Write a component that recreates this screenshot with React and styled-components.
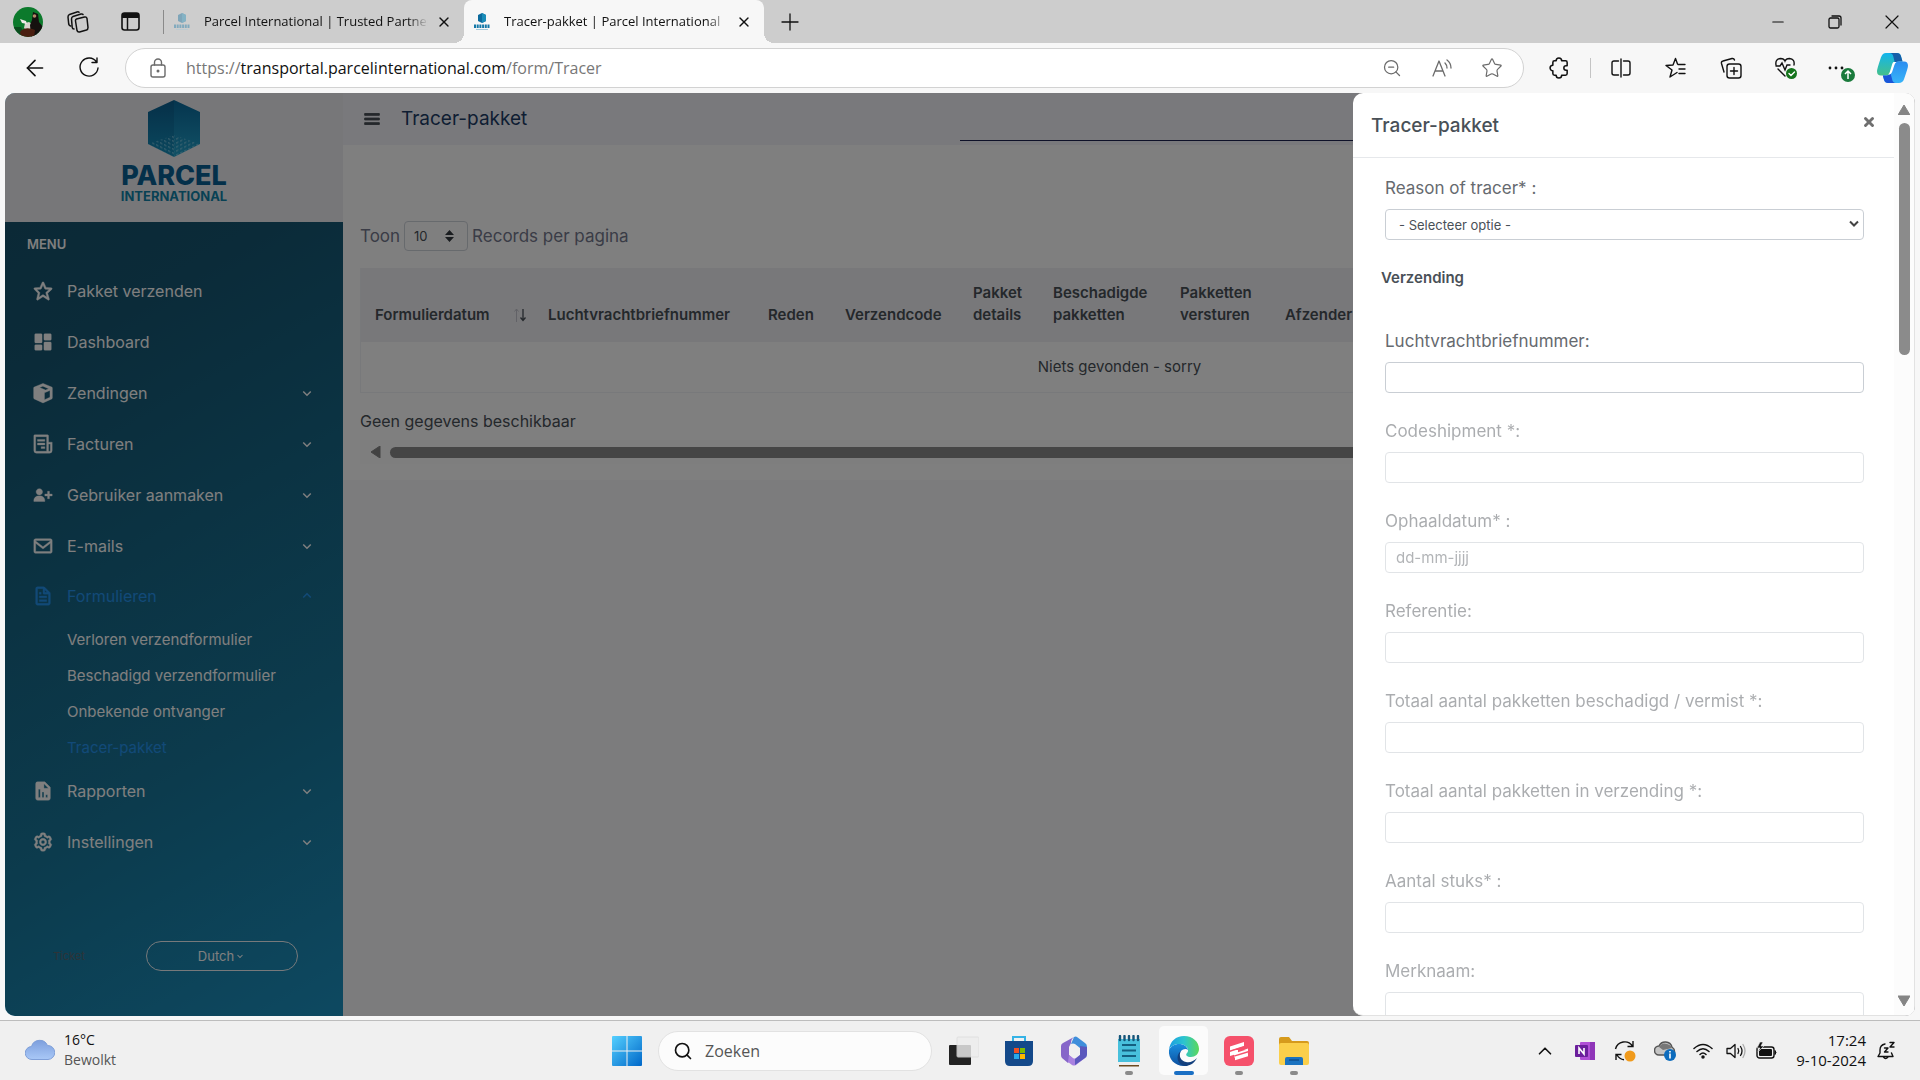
import React from 'react';
import styled, { createGlobalStyle, css } from 'styled-components';
import {
  BiStar, BiSolidDashboard, BiSolidUserPlus, BiEnvelope, BiFile,
  BiSolidReport, BiCog, BiChevronDown, BiChevronUp, BiMenu,
} from 'react-icons/bi';
import { ArrowLeft, X, Minus, ZoomOut, Star, ChevronUp, Search } from 'lucide-react';

const GlobalStyle = createGlobalStyle`
  *, *::before, *::after { box-sizing: border-box; }
  html, body { margin: 0; height: 100%; overflow: hidden; }
  button, input, select { font: inherit; color: inherit; margin: 0; }
  button { padding: 0; border: 0; background: none; cursor: pointer; }
  a { color: inherit; text-decoration: none; }
  svg { display: block; flex: none; }
`;

const uiFont = "'Open Sans', 'Noto Sans', sans-serif";
const pageFont = "Inter, 'Open Sans', sans-serif";

const Desktop = styled.div`
  display: flex;
  flex-direction: column;
  height: 100vh;
  background: #f7f7f7;
  font-family: ${uiFont};
  color: #111;
`;

/* ---------- browser frame ---------- */
const TabStrip = styled.header`
  display: flex;
  align-items: center;
  height: 43px;
  background: #cdcdcd;
  padding-left: 13px;
`;

const Avatar = styled.button`
  width: 30px;
  height: 30px;
  border-radius: 50%;
  overflow: hidden;
  margin-right: 24px;
`;

const StripButton = styled.button`
  display: flex;
  align-items: center;
  justify-content: center;
  width: 22px;
  height: 30px;
  margin-right: 30px;
`;

const StripRule = styled.span`
  width: 1px;
  height: 24px;
  margin-left: -8px;
  background: #8a8a8a;
`;

const Tab = styled.div`
  position: relative;
  display: flex;
  align-items: center;
  gap: 14px;
  height: 43px;
  width: 300px;
  padding: 0 12px 0 10px;
  font-size: 13px;
  border-radius: 8px 8px 0 0;
  ${(p) => p.$active && css`
    background: #f7f7f7;
    &::before, &::after {
      content: '';
      position: absolute;
      bottom: 0;
      width: 10px;
      height: 10px;
    }
    &::before { left: -10px; background: radial-gradient(circle at 0 0, transparent 10px, #f7f7f7 10px); }
    &::after { right: -10px; background: radial-gradient(circle at 100% 0, transparent 10px, #f7f7f7 10px); }
  `}
`;

const TabTitle = styled.a`
  flex: 1;
  overflow: hidden;
  white-space: nowrap;
  line-height: 20px;
  padding-bottom: 2px;
  margin-right: -6px;
  mask-image: linear-gradient(90deg, #000 calc(100% - 20px), transparent);
`;

const TabClose = styled.button`
  width: 16px;
  height: 16px;
`;

const NewTab = styled.button`
  margin-left: 17px;
`;

const WindowControls = styled.div`
  display: flex;
  margin-left: auto;
`;

const WindowButton = styled.button`
  display: flex;
  align-items: center;
  justify-content: center;
  width: 57px;
  height: 43px;
`;

const Toolbar = styled.div`
  display: flex;
  align-items: center;
  height: 50px;
  padding: 0 4px 0 22px;
`;

const NavButtons = styled.div`
  display: flex;
  gap: 26px;
`;

const ToolButton = styled.button`
  position: relative;
  display: flex;
  align-items: center;
  justify-content: center;
  width: ${(p) => p.$w || 55}px;
  height: 40px;
  flex: none;
`;

const AddressBar = styled.div`
  display: flex;
  align-items: center;
  flex: 1;
  height: 40px;
  margin: 0 8px 0 21px;
  padding: 0 6px 0 22px;
  border: 1px solid #d2d2d2;
  border-radius: 20px;
  background: #fff;
  color: #6b6b6b;
`;

const Url = styled.a`
  flex: 1;
  margin-left: 18px;
  font-size: 16px;
  line-height: 24px;
  color: #777;
  strong { font-weight: 400; color: #111; }
`;

const ToolRule = styled.span`
  width: 1px;
  height: 20px;
  margin: 0 3px;
  background: #c4c4c4;
`;

/* ---------- web page ---------- */
const Viewport = styled.div`
  position: relative;
  flex: 1;
  min-height: 0;
  display: flex;
  margin: 0 5px 4px;
  border-radius: 10px;
  overflow: hidden;
  background: #f8f8fb;
  font-family: ${pageFont};
  color: #495057;
`;

const Sidebar = styled.aside`
  display: flex;
  flex-direction: column;
  width: 338px;
  flex: none;
  background: linear-gradient(150deg, #165068 0%, #165672 25%, #18769a 70%, #1b92c2 100%);
  color: #fff;
`;

const Brand = styled.a`
  display: flex;
  flex-direction: column;
  align-items: center;
  height: 129px;
  padding-top: 7px;
  background: #efeff3;
  color: #0d6f9f;
`;

const BrandName = styled.span`
  font-size: 27px;
  line-height: 26px;
  font-weight: 800;
  margin-top: 6px;
  color: #096195;
`;

const BrandSub = styled.span`
  font-size: 13px;
  line-height: 14px;
  font-weight: 700;
  color: #1183a8;
`;

const MenuTitle = styled.h2`
  margin: 0;
  padding-left: 22px;
  font-size: 13px;
  font-weight: 600;
  line-height: 44px;
  height: 43px;
`;

const Menu = styled.ul`
  list-style: none;
  margin: 0;
  padding: 0;
`;

const MenuLink = styled.a`
  display: flex;
  align-items: center;
  gap: 13px;
  height: ${(p) => (p.$active ? 50 : 51)}px;
  padding: 0 27px;
  font-size: 16px;
  color: ${(p) => (p.$active ? '#2494f0' : '#fff')};
`;

const MenuIcon = styled.span`
  svg { stroke: currentColor; stroke-width: 0.4px; }
`;

const MenuLabel = styled.span`
  flex: 1;
`;

const SubLink = styled.a`
  display: flex;
  align-items: center;
  height: 36px;
  padding-left: 62px;
  font-size: 15px;
  color: ${(p) => (p.$active ? '#2494f0' : '#fff')};
`;

const SidebarFoot = styled.div`
  display: flex;
  align-items: center;
  justify-content: space-between;
  margin-top: auto;
  padding: 0 45px 45px 48px;
`;

const FootLink = styled.a`
  font-size: 11px;
  color: #5a6870;
`;

const LanguageButton = styled.button`
  display: flex;
  align-items: center;
  justify-content: center;
  width: 152px;
  height: 30px;
  border: 1px solid #eef3f6;
  border-radius: 15px;
  font-size: 13px;
`;

const Main = styled.main`
  flex: 1;
  min-width: 0;
`;

const Topbar = styled.div`
  display: flex;
  align-items: center;
  height: 52px;
  padding-left: 18px;
  background: #f3f3f8;
`;

const PageTitle = styled.h1`
  flex: none;
  width: 559px;
  margin: 0 0 0 18px;
  font-size: 19px;
  line-height: 24px;
  font-weight: 400;
  color: #1d3c66;
`;

const TopSearch = styled.input`
  flex: 1;
  min-width: 0;
  height: 44px;
  border: 0;
  border-bottom: 1px solid #1d2350;
  background: none;
  outline: 0;
`;

const Content = styled.section`
  padding: 76px 37px 16px 17px;
  background: #fff;
`;

const LengthRow = styled.label`
  display: flex;
  align-items: center;
  gap: 4px;
  height: 30px;
  font-size: 17px;
  color: #74788d;
`;

const LengthBox = styled.span`
  position: relative;
  display: block;
  svg { position: absolute; right: 14px; top: 9px; pointer-events: none; }
`;

const LengthSelect = styled.select`
  appearance: none;
  display: block;
  width: 64px;
  height: 30px;
  padding: 0 9px;
  border: 1px solid #ced4da;
  border-radius: 4px;
  background: #fff;
  font-size: 13px;
  color: #495057;
`;

const Table = styled.table`
  width: 100%;
  margin-top: 17px;
  border-collapse: separate;
  border-spacing: 0;
  table-layout: fixed;
  border: solid #f1f2f6;
  border-width: 0 0 1px 1px;
  font-size: 15px;
  line-height: 22px;
`;

const Th = styled.th`
  width: ${(p) => (p.$w ? `${p.$w}px` : 'auto')};
  padding: 14px 8px 16px 14px;
  background: #f1f1f5;
  font-weight: 600;
  text-align: left;
  vertical-align: bottom;
`;

const HeadCell = styled.span`
  display: flex;
  justify-content: space-between;
  align-items: center;
`;

const Td = styled.td`
  padding: 14px;
  text-align: center;
`;

const TableInfo = styled.p`
  margin: 17px 0 8px;
  font-size: 16px;
  line-height: 22px;
`;

const HScroll = styled.div`
  display: flex;
  align-items: center;
  gap: 8px;
  height: 24px;
  padding: 0 10px;
  background: #fcfcfc;
`;

const HThumb = styled.span`
  flex: 1;
  height: 11px;
  border-radius: 6px;
  background: #8b8b8b;
`;

const Backdrop = styled.div`
  position: absolute;
  inset: 0;
  background: rgba(0, 0, 0, 0.5);
`;

/* ---------- drawer ---------- */
const Drawer = styled.div`
  position: absolute;
  inset: 0 0 0 auto;
  display: flex;
  width: 562px;
  border-radius: 10px 0 0 10px;
  overflow: hidden;
  background: #fff;
  border-right: 1px solid #e2e2e2;
  border-bottom: 1px solid #e2e2e2;
`;

const DrawerPanel = styled.div`
  flex: 1;
  min-width: 0;
  overflow: hidden;
`;

const DrawerHead = styled.div`
  display: flex;
  justify-content: space-between;
  align-items: center;
  height: 65px;
  padding: 0 15px 0 18px;
  border-bottom: 1px solid #e6e8eb;
`;

const DrawerTitle = styled.h2`
  margin: 0;
  padding-top: 2px;
  font-size: 19px;
  line-height: 24px;
  font-weight: 500;
`;

const CloseButton = styled.button`
  width: 20px;
  height: 26px;
  padding-bottom: 6px;
  display: flex;
  align-items: center;
  justify-content: center;
  color: #6f6f6f;
`;

const Form = styled.form`
  padding: 18px 30px 0 28px;
`;

const Field = styled.div`
  display: flex;
  flex-direction: column;
  gap: 9px;
  padding-left: 4px;
  margin-bottom: 26px;
  opacity: ${(p) => (p.$off ? 0.55 : 1)};
`;

const FieldLabel = styled.label`
  font-size: 17px;
  line-height: 24px;
  color: #666a6f;
`;

const controlBox = css`
  width: 100%;
  height: 31px;
  padding: 0 10px;
  border: 1px solid #c9ced4;
  border-radius: 4px;
  background: #fff;
  outline: 0;
`;

const TextInput = styled.input`
  ${controlBox}
  font-size: 15px;
  &::placeholder { color: #74787d; opacity: 1; }
`;

const SelectBox = styled.span`
  position: relative;
  display: block;
  svg { position: absolute; right: 4px; top: 10px; pointer-events: none; }
`;

const SelectInput = styled.select`
  ${controlBox}
  appearance: none;
  display: block;
  padding: 0 13px;
  font-size: 13px;
`;

const SectionTitle = styled.h3`
  margin: 0 0 39px;
  font-size: 15px;
  line-height: 24px;
  font-weight: 600;
`;

const VScroll = styled.div`
  display: flex;
  flex-direction: column;
  align-items: center;
  width: 20px;
  padding: 10px 0 8px;
  background: #fcfcfc;
`;

const VThumb = styled.span`
  width: 11px;
  height: 232px;
  margin: 8px 0 auto;
  border-radius: 6px;
  background: #8b8b8b;
`;

/* ---------- taskbar ---------- */
const Taskbar = styled.footer`
  display: grid;
  grid-template-columns: 1fr auto 1fr;
  align-items: center;
  height: 60px;
  border-top: 1px solid #bdbdbd;
  background: #f0f0f0;
`;

const Weather = styled.button`
  display: flex;
  align-items: center;
  gap: 9px;
  padding: 0 0 2px 25px;
  text-align: left;
  font-size: 14px;
  line-height: 20px;
`;

const Lines = styled.span`
  display: flex;
  flex-direction: column;
  text-align: ${(p) => p.$align || 'left'};
`;

const Muted = styled.span`
  color: #555;
`;

const Dock = styled.div`
  display: flex;
  align-items: center;
`;

const DockButton = styled.button`
  position: relative;
  display: flex;
  align-items: center;
  justify-content: center;
  width: 49px;
  height: 49px;
  margin: 0 3px;
  border-radius: 5px;
  background: ${(p) => (p.$active ? '#fbfbfb' : 'none')};
  &::after {
    content: '';
    display: ${(p) => (p.$open ? 'block' : 'none')};
    position: absolute;
    bottom: 0;
    width: ${(p) => (p.$active ? 20 : 8)}px;
    height: 4px;
    border-radius: 2px;
    background: ${(p) => (p.$active ? '#1a6fc4' : '#8a8a8a')};
  }
`;

const SearchPill = styled.label`
  display: flex;
  align-items: center;
  gap: 10px;
  width: 274px;
  height: 40px;
  margin: 0 4px;
  padding: 0 14px;
  border: 1px solid #e2e2e2;
  border-radius: 20px;
  background: #fcfcfc;
`;

const SearchInput = styled.input`
  flex: 1;
  min-width: 0;
  border: 0;
  background: none;
  outline: 0;
  font-size: 16px;
  &::placeholder { color: #555; opacity: 1; }
`;

const Tray = styled.div`
  display: flex;
  align-items: center;
  justify-content: flex-end;
  padding-right: 20px;
`;

const TrayButton = styled.button`
  display: flex;
  align-items: center;
  justify-content: center;
  width: ${(p) => p.$w || 40}px;
  height: 40px;
`;

const Clock = styled.button`
  margin: 0 6px 0 15px;
  padding-bottom: 2px;
  font-size: 15px;
  line-height: 20px;
`;

/* ---------- drawings ---------- */
const Line = ({ w = 22, h, vb = 22, sw = 1.4, children }) => (
  <svg width={w} height={h || w} viewBox={`0 0 ${vb} ${vb}`} fill="none" stroke="currentColor" strokeWidth={sw} strokeLinecap="round" strokeLinejoin="round" aria-hidden="true">{children}</svg>
);

const AvatarArt = () => (
  <svg width="30" height="30" viewBox="0 0 30 30">
    <rect width="30" height="30" fill="#0c7a2c" />
    <path d="M0 20h8l2 4-4 6H0z" fill="#0a4d1e" />
    <path d="M12 16l4-1 3 2 1 6-5 2-4-4z" fill="#d9d4cd" />
    <path d="M7 12l6 2 1 3-5-1z" fill="#f0ece8" />
    <path d="M20 5l5 2 1 8 4 5v10H18l-1-12 2-5z" fill="#15110f" />
    <path d="M7 25c4-5 10-4 15-2l-1 7H8z" fill="#4a1e10" />
    <circle cx="21.500" cy="9" r="1.800" fill="#b98a6a" />
  </svg>
);

const CubeArt = () => (
  <svg width="52" height="57" viewBox="0 0 52 57" aria-hidden="true">
    <defs>
      <linearGradient id="cubeL" x1="0" y1="0" x2="0" y2="1"><stop offset="0" stopColor="#0b5f90" /><stop offset="1" stopColor="#1791bd" /></linearGradient>
      <linearGradient id="cubeR" x1="0" y1="0" x2="0" y2="1"><stop offset="0" stopColor="#0a6a9d" /><stop offset="1" stopColor="#23a3cc" /></linearGradient>
      <pattern id="dotsL" width="4" height="4" patternUnits="userSpaceOnUse" patternTransform="skewY(26)"><rect width="2.400" height="1.600" fill="#8fd3ea" /></pattern>
      <pattern id="dotsR" width="4" height="4" patternUnits="userSpaceOnUse" patternTransform="skewY(-26)"><rect width="2.400" height="1.600" fill="#8fd3ea" /></pattern>
    </defs>
    <path d="M26 0L0 12v32l26 13z" fill="url(#cubeL)" />
    <path d="M26 0l26 12v32L26 57z" fill="url(#cubeR)" />
    <path d="M26 35v22L0 44z" fill="url(#dotsL)" opacity=".6" />
    <path d="M26 35v22l26-13z" fill="url(#dotsR)" opacity=".6" />
  </svg>
);

const Favicon = ({ dim }) => (
  <svg width="16" height="18" viewBox="0 0 16 18" opacity={dim ? 0.4 : 1} aria-hidden="true">
    <path d="M8 0l4 2v6l-4 2-4-2V2z" fill="#0b6a9d" />
    <path d="M8 0l4 2v6l-4 2z" fill="#1a8cb8" />
    <path d="M0 13.200h16" stroke="#1478a8" strokeWidth="3.400" strokeDasharray="2 .7" />
    <rect x="2" y="16" width="12" height="1" fill="#a4c9da" />
  </svg>
);

const RefreshArt = () => (
  <Line><path d="M18.500 5A9 9 0 1 0 20 11M19 1v4.500h-5" /></Line>
);

const ZendingenIcon = ({ size }) => (
  <svg width={size} height={size} viewBox="0 0 24 24" aria-hidden="true">
    <path fill="currentColor" fillRule="evenodd" d="M12 1.500L21.500 5.500q.7.300.7 1v10.800q0 .8-.7 1.200L12 22.800 2.500 18.500q-.7-.4-.7-1.200V6.500q0-.7.700-1zM13.600 11.800v7.600l6-2.800V9.200zM8.300 5.900l6.500 2.900 3.400-1.500-6.300-2.700z" />
  </svg>
);

const FacturenIcon = ({ size }) => (
  <svg width={size} height={size} viewBox="0 0 24 24" aria-hidden="true">
    <path fill="currentColor" d="M19 22H5a3 3 0 0 1-3-3V3a1 1 0 0 1 1-1h14a1 1 0 0 1 1 1v7h4v9a3 3 0 0 1-3 3zm-1-10v7a1 1 0 0 0 2 0v-7zm-2 8V4H4v15a1 1 0 0 0 1 1zM6 7h8v2H6zm0 4h8v2H6zm4 4h4v2h-4z" />
  </svg>
);

const Caret = () => (
  <svg width="12" height="10" viewBox="0 0 12 10" aria-hidden="true"><path d="M2 2.500l4 4 4-4" fill="none" stroke="#444" strokeWidth="2" /></svg>
);

const UpDown = () => (
  <svg width="9" height="12" viewBox="0 0 9 12" aria-hidden="true"><path d="M0 5l4.500-5L9 5zM0 7l4.500 5L9 7z" fill="#343a40" /></svg>
);

const SortArrows = () => (
  <svg width="12" height="14" viewBox="0 0 12 14" aria-hidden="true" fill="none">
    <path d="M2.500 14V1M.5 3.500L2.500 1l2 2.500" stroke="#c4c5ce" />
    <path d="M9 1v11M6.500 9.500L9 12.500l2.500-3" stroke="#495057" strokeWidth="1.300" />
  </svg>
);

const Arrow = ({ dir }) => {
  const d = { left: 'M10 0v12L1 6z', up: 'M0 12h12L6 2z', down: 'M0 1h12L6 11z' }[dir];
  return <svg width="12" height="12" viewBox="0 0 12 12" aria-hidden="true"><path d={d} fill="#858585" stroke="#858585" strokeLinejoin="round" /></svg>;
};

const Copilot = () => (
  <svg width="31" height="30" viewBox="0 0 31 28" preserveAspectRatio="none" aria-hidden="true">
    <defs>
      <linearGradient id="cpA" x1="0" y1="0" x2="0" y2="1"><stop offset="0" stopColor="#12b5ee" /><stop offset="1" stopColor="#45c08a" /></linearGradient>
      <linearGradient id="cpB" x1="0" y1="0" x2="0" y2="1"><stop offset="0" stopColor="#2b8df0" /><stop offset="1" stopColor="#38b4f8" /></linearGradient>
    </defs>
    <path d="M9 0h11q3 0 4 3l1.500 5H22q-4 0-5 3l-3 8q-1 2-3 2H4q-4 0-4-4 0-2 4-13Q5.500 0 9 0z" fill="url(#cpA)" />
    <path d="M17 0h3q3 0 4 3l1.500 5H22q-3 0-4 1.500L16.500 4Q16 0 12 0z" fill="#175ea8" />
    <path d="M22 28H11q-3 0-4-3l-1.200-4H10q3 0 4-3l3-7q1-3 4-3h6q4 0 4 4 0 2-4 12.500Q25.500 28 22 28z" fill="url(#cpB)" />
    <path d="M14 28h-3q-3 0-4-3l-1.200-4H10q2.500 0 3.500-2l1.500 5q.7 4 4 4z" fill="#1a55d8" />
    <path d="M16.500 8.500h3q-1.500 1-2 2.500l-2.500 7q-.8 2-2.500 2H11q1.200-.8 1.800-2.300l2.200-6.700q.5-1.800 1.500-2.500z" fill="#fff" />
  </svg>
);

const dockArt = {
  start: (
    <svg width="30" height="30" viewBox="0 0 30 30"><defs><linearGradient id="win" x1="0" y1="0" x2="1" y2="1"><stop offset="0" stopColor="#55d0ff" /><stop offset="1" stopColor="#0067c8" /></linearGradient></defs>
      <path fill="url(#win)" d="M1 0h13.500v14.500H0V1q0-1 1-1zM15.500 0H29q1 0 1 1v13.500H15.500zM0 15.500h14.500V30H1q-1 0-1-1zM15.500 15.500H30V29q0 1-1 1H15.500z" /></svg>
  ),
  tasks: (
    <svg width="30" height="30" viewBox="0 0 30 30"><rect x="0" y="9" width="22" height="20" rx="1" fill="#222" /><rect x="8" y="1" width="22" height="20" rx="1" fill="#ededed" opacity=".82" stroke="#dcdcdc" /></svg>
  ),
  store: (
    <svg width="30" height="30" viewBox="0 0 30 30"><path d="M9 6V1h12v5" fill="none" stroke="#35b3e6" strokeWidth="2" /><path d="M1 5h28v20q0 5-5 5H6q-5 0-5-5z" fill="#14498a" /><path d="M10 12h5v5h-5z" fill="#f25022" /><path d="M16 12h5v5h-5z" fill="#7fba00" /><path d="M10 18h5v5h-5z" fill="#29a8ea" /><path d="M16 18h5v5h-5z" fill="#ffb900" /></svg>
  ),
  office: (
    <svg width="28" height="30" viewBox="0 0 28 30"><path d="M14 1q2-1 3 0l8 6q2 1 2 4v7q0 2-2 3l-5-3v-6l-5-4q-2-1-4 0z" fill="#3f8edb" /><path d="M14 1q-3 2-3 6l-2 4v8l3 3-4 5-6-5q-1-1-1-3v-9q0-2 2-3z" fill="#8666c9" /><path d="M9 19l4 3q1.500 1 3 0l4-3v-5l6 6-1 2-9 7q-2 1-4 0l-4-3z" fill="#a981e0" /><path d="M20 10v9l-5 4 0 6 10-7q2-1 2-4v-7z" fill="#5b58bd" /></svg>
  ),
  notepad: (
    <svg width="24" height="32" viewBox="0 0 24 32"><path d="M1 4h22v24H1z" fill="#48c0dc" /><path d="M1 27h22v3q0 1-1 1H2q-1 0-1-1z" fill="#eee" /><path d="M2 30h20v1.500H2z" fill="#6b4a1f" /><path d="M3 1v4M7.500 1v4M12 1v4M16.500 1v4M21 1v4" stroke="#16567a" strokeWidth="2.400" strokeLinecap="round" /><path d="M5 10h14M5 15.500h14M5 21h14" stroke="#145f80" strokeWidth="1.800" /></svg>
  ),
  edge: (
    <svg width="32" height="32" viewBox="0 0 32 32"><defs><linearGradient id="edA" x1="0" y1="0" x2="1" y2="0"><stop offset="0" stopColor="#1b9de2" /><stop offset=".5" stopColor="#2cc4cf" /><stop offset="1" stopColor="#5cd859" /></linearGradient><linearGradient id="edB" x1="0" y1="0" x2="0" y2="1"><stop offset="0" stopColor="#1a8fe0" /><stop offset="1" stopColor="#0c4f9e" /></linearGradient></defs>
      <path d="M1 15C2 6 8 1 16 1c9 0 15 6 15 13 0 5-4 8-8 8-4 0-6-2-4-4 1-1 1-2 1-3 0-3-4-6-9-6-5 0-9 3-10 6z" fill="url(#edA)" /><path d="M1 15c2-4 6-6 10-6 4 0 8 2 9 6-2-2-5-1-7 1-4 5 0 12 7 14-1 1-3 1-4 1C7 31 0 24 1 15z" fill="url(#edB)" /><path d="M13 16c-3 5 0 10 5 11 4 1 8-1 11-4-3 6-8 8-12 8C9 30 7 20 13 16z" fill="#123f7d" /></svg>
  ),
  red: (
    <svg width="30" height="30" viewBox="0 0 30 30"><rect width="30" height="30" rx="6" fill="#f5516b" /><path d="M6 10.500L20 6v4.200L6 14.700zM10 14.800l-4 1.300v-1.900zM6 14h8v2.200L24 13v4L10 21.500v-2.700L6 20zM20 14l4-1.500v2zM11 20.500l13-4v3.800l-13 4z" fill="#fff" /><path d="M5 15.500l15-4.800M10 20.200l15-4.700" stroke="#f5516b" strokeWidth="1.400" /></svg>
  ),
  folder: (
    <svg width="32" height="28" viewBox="0 0 32 28"><path d="M1 2q0-2 2-2h8l3 4h15q2 0 2 2v6H1z" fill="#d69a1c" /><path d="M1 8q0-2 2-2h26q2 0 2 2v18q0 2-2 2H3q-2 0-2-2z" fill="#fbcf4a" /><path d="M7 28v-6q0-2 2-2h14q2 0 2 2v6z" fill="#1b73c0" /><path d="M11 23h10" stroke="#0f4f8f" strokeWidth="1.500" /></svg>
  ),
};

/* ---------- data ---------- */
const menuItems = [
  { label: 'Pakket verzenden', Icon: BiStar },
  { label: 'Dashboard', Icon: BiSolidDashboard },
  { label: 'Zendingen', Icon: ZendingenIcon, more: true },
  { label: 'Facturen', Icon: FacturenIcon, more: true },
  { label: 'Gebruiker aanmaken', Icon: BiSolidUserPlus, more: true },
  { label: 'E-mails', Icon: BiEnvelope, more: true },
  {
    label: 'Formulieren', Icon: BiFile, more: true, active: true,
    children: ['Verloren verzendformulier', 'Beschadigd verzendformulier', 'Onbekende ontvanger', 'Tracer-pakket'],
  },
  { label: 'Rapporten', Icon: BiSolidReport, more: true },
  { label: 'Instellingen', Icon: BiCog, more: true },
];

const columns = [
  ['Formulierdatum', 173, true], ['Luchtvrachtbriefnummer', 220], ['Reden', 77], ['Verzendcode', 128],
  ['Pakket details', 80], ['Beschadigde pakketten', 127], ['Pakketten versturen', 105], ['Afzender'],
];

const fields = [
  { id: 'awb', label: 'Luchtvrachtbriefnummer:' },
  { id: 'code', label: 'Codeshipment *:', off: true },
  { id: 'pickup', label: 'Ophaaldatum* :', off: true, placeholder: 'dd-mm-jjjj' },
  { id: 'ref', label: 'Referentie:', off: true },
  { id: 'damaged', label: 'Totaal aantal pakketten beschadigd / vermist *:', off: true },
  { id: 'total', label: 'Totaal aantal pakketten in verzending *:', off: true },
  { id: 'pieces', label: 'Aantal stuks* :', off: true },
  { id: 'brand', label: 'Merknaam:', off: true },
];

const dockItems = [
  { name: 'Taakweergave', art: 'tasks' },
  { name: 'Store', art: 'store' },
  { name: 'Microsoft 365', art: 'office' },
  { name: 'Kladblok', art: 'notepad', open: true },
  { name: 'Edge', art: 'edge', open: true, active: true },
  { name: 'App', art: 'red', open: true },
  { name: 'Verkenner', art: 'folder', open: true },
];

function BrowserFrame() {
  return (
    <>
      <TabStrip>
        <Avatar aria-label="Profiel"><AvatarArt /></Avatar>
        <StripButton aria-label="Werkruimten">
          <Line sw={1.5}><path d="M9.500 8l8-2q2-.5 2.500 1.500l1 9q0 2-1.500 2.500l-7 2q-2 .3-2.500-1.500L8.500 10q-.2-1.500 1-2z" /><path d="M7 18q-1.500 0-1.800-1.700L4.500 8q0-2 1.500-2.500l8-2.500q1.500-.3 2 .5M3.500 15q-1.500-.5-1.800-2L1 6q0-2 1.500-2.500L10 1q1.500-.4 2 .3" /></Line>
        </StripButton>
        <StripButton aria-label="Tabbladacties">
          <svg width="19" height="19" viewBox="0 0 19 19"><rect x="1" y="1" width="17" height="17" rx="2.500" fill="none" stroke="#111" strokeWidth="1.600" /><path d="M1 3q0-2 2-2h13q2 0 2 2v3H1z" fill="#111" /><path d="M6.500 6v12" stroke="#111" strokeWidth="1.500" /></svg>
        </StripButton>
        <StripRule />
        <Tab>
          <Favicon dim />
          <TabTitle href="#">Parcel International | Trusted Partner</TabTitle>
          <TabClose aria-label="Sluiten"><X size={16} strokeWidth={2} /></TabClose>
        </Tab>
        <Tab $active>
          <Favicon />
          <TabTitle href="#">Tracer-pakket | Parcel International</TabTitle>
          <TabClose aria-label="Sluiten"><X size={16} strokeWidth={2} /></TabClose>
        </Tab>
        <NewTab aria-label="Nieuw tabblad"><Line w={18} vb={18} sw={1.3}><path d="M9 1v16M1 9h16" /></Line></NewTab>
        <WindowControls>
          <WindowButton aria-label="Minimaliseren"><Minus size={18} strokeWidth={1.4} /></WindowButton>
          <WindowButton aria-label="Verkleinen"><Line w={14} vb={14} sw={1.3}><rect x="1" y="3" width="10" height="10" rx="1.500" /><path d="M4 1h7q2 0 2 2v7" /></Line></WindowButton>
          <WindowButton aria-label="Venster sluiten"><Line w={14} vb={14} sw={1.2}><path d="M1 1l12 12M13 1L1 13" /></Line></WindowButton>
        </WindowControls>
      </TabStrip>
      <Toolbar>
        <NavButtons>
          <ToolButton $w={26} aria-label="Vorige"><ArrowLeft size={26} strokeWidth={1.5} /></ToolButton>
          <ToolButton $w={30} aria-label="Vernieuwen"><RefreshArt /></ToolButton>
        </NavButtons>
        <AddressBar>
          <Line w={20} h={20} vb={20} sw={1.4}><rect x="3" y="7" width="14" height="12" rx="2" /><path d="M6.500 7V4.500a3.500 3.500 0 0 1 7 0V7" /><circle cx="10" cy="13" r=".8" /></Line>
          <Url href="#">https://<strong>transportal.parcelinternational.com</strong>/form/Tracer</Url>
          <ToolButton $w={50} aria-label="Zoom"><ZoomOut size={20} strokeWidth={1.5} /></ToolButton>
          <ToolButton $w={50} aria-label="Voorlezen"><Line w={20} vb={20} sw={1.3}><path d="M1 18L7 3l6 15M3 13h8M13 5q2 2 2 5M15 2q4 3 4 8" /></Line></ToolButton>
          <ToolButton $w={50} aria-label="Favoriet"><Star size={22} strokeWidth={1.3} /></ToolButton>
        </AddressBar>
        <ToolButton aria-label="Extensies"><Line w={22} h={22} vb={20}><path d="M6.500 3.500a2.500 2.500 0 0 1 5 0H15a1.500 1.500 0 0 1 1.500 1.500v3h-1a2 2 0 0 0 0 4h1v3a1.500 1.500 0 0 1-1.500 1.500h-3.500a2.500 2.500 0 0 1-5 0H5A1.500 1.500 0 0 1 3.500 15v-2.500a2.500 2.500 0 0 1 0-5V5A1.500 1.500 0 0 1 5 3.500z" /></Line></ToolButton>
        <ToolRule />
        <ToolButton $w={54} aria-label="Splitscherm"><Line w={20} h={20} vb={20}><path d="M7.500 3H3q-2 0-2 2v10q0 2 2 2h4.500M12.500 3H17q2 0 2 2v10q0 2-2 2h-4.500M10 1v18" /></Line></ToolButton>
        <ToolButton aria-label="Favorieten"><Line><path d="M13 7.500h7M14 12h6M14 16.500h6M12 15.500L5 20l2-7-6-4.500 7-.5L10.500 1.500 12.500 7" /></Line></ToolButton>
        <ToolButton aria-label="Collecties"><Line><rect x="7" y="7" width="14" height="14" rx="2.500" /><path d="M14 10.500v7M10.500 14h7M4 15L1.500 6.500Q1 4.500 3 4l9-2.500q2-.3 2.500 1.500" /></Line></ToolButton>
        <ToolButton aria-label="Browser essentials">
          <svg width="24" height="24" viewBox="0 0 24 24" fill="none" stroke="#111" strokeWidth="1.400" strokeLinecap="round"><path d="M2 9Q1 3 6.500 2.500 10 2.500 11 5q1-2.500 4.500-2.500Q21 3 20 9M4 13l7 7M2 10h4l2-3 3 7 2-5h3" /><circle cx="17.500" cy="17.500" r="5.500" fill="#15741c" stroke="none" /><path d="M15 17.500l2 2 3.500-3.500" stroke="#fff" /></svg>
        </ToolButton>
        <ToolButton aria-label="Meer">
          <svg width="28" height="28" viewBox="0 0 28 28"><g fill="#111"><circle cx="3" cy="14" r="1.400" /><circle cx="9" cy="14" r="1.400" /><circle cx="15" cy="14" r="1.400" /></g><circle cx="21" cy="21" r="7" fill="#1a7a3c" /><path d="M21 25v-7.500M18 20l3-3 3 3" fill="none" stroke="#fff" strokeWidth="1.500" /></svg>
        </ToolButton>
        <ToolButton $w={48} aria-label="Copilot"><Copilot /></ToolButton>
      </Toolbar>
    </>
  );
}

function SideMenu() {
  return (
    <Sidebar>
      <Brand href="#">
        <CubeArt />
        <BrandName>PARCEL</BrandName>
        <BrandSub>INTERNATIONAL</BrandSub>
      </Brand>
      <MenuTitle>MENU</MenuTitle>
      <Menu>
        {menuItems.map(({ label, Icon, more, active, children }) => (
          <li key={label}>
            <MenuLink href="#" $active={active}>
              <MenuIcon><Icon size={22} /></MenuIcon>
              <MenuLabel>{label}</MenuLabel>
              {more && (active ? <BiChevronUp size={18} /> : <BiChevronDown size={18} />)}
            </MenuLink>
            {children && (
              <Menu>
                {children.map((c) => (
                  <li key={c}><SubLink href="#" $active={c === 'Tracer-pakket'}>{c}</SubLink></li>
                ))}
              </Menu>
            )}
          </li>
        ))}
      </Menu>
      <SidebarFoot>
        <FootLink href="#">Ticket</FootLink>
        <LanguageButton>Dutch<BiChevronDown size={12} /></LanguageButton>
      </SidebarFoot>
    </Sidebar>
  );
}

function Overview() {
  return (
    <Main>
      <Topbar>
        <button aria-label="Menu"><BiMenu size={22} strokeWidth={1} /></button>
        <PageTitle>Tracer-pakket</PageTitle>
        <TopSearch aria-label="Zoeken op pagina" />
      </Topbar>
      <Content>
        <LengthRow>
          Toon
          <LengthBox>
            <LengthSelect defaultValue="10"><option>10</option><option>25</option></LengthSelect>
            <UpDown />
          </LengthBox>
          Records per pagina
        </LengthRow>
        <Table>
          <thead>
            <tr>
              {columns.map(([name, w, sort]) => (
                <Th key={name} $w={w}>{sort ? <HeadCell>{name}<SortArrows /></HeadCell> : name}</Th>
              ))}
            </tr>
          </thead>
          <tbody><tr><Td colSpan={columns.length}>Niets gevonden - sorry</Td></tr></tbody>
        </Table>
        <TableInfo>Geen gegevens beschikbaar</TableInfo>
        <HScroll><Arrow dir="left" /><HThumb /></HScroll>
      </Content>
    </Main>
  );
}

function TracerDrawer() {
  return (
    <Drawer role="dialog" aria-label="Tracer-pakket">
      <DrawerPanel>
        <DrawerHead>
          <DrawerTitle>Tracer-pakket</DrawerTitle>
          <CloseButton aria-label="Sluiten"><X size={14} strokeWidth={5} /></CloseButton>
        </DrawerHead>
        <Form>
          <Field>
            <FieldLabel htmlFor="reason">Reason of tracer* :</FieldLabel>
            <SelectBox>
              <SelectInput id="reason"><option>- Selecteer optie -</option></SelectInput>
              <Caret />
            </SelectBox>
          </Field>
          <SectionTitle>Verzending</SectionTitle>
          {fields.map((f) => (
            <Field key={f.id} $off={f.off}>
              <FieldLabel htmlFor={f.id}>{f.label}</FieldLabel>
              <TextInput id={f.id} placeholder={f.placeholder} disabled={f.off} />
            </Field>
          ))}
        </Form>
      </DrawerPanel>
      <VScroll><Arrow dir="up" /><VThumb /><Arrow dir="down" /></VScroll>
    </Drawer>
  );
}

function TaskBar() {
  return (
    <Taskbar>
      <Weather>
        <svg width="30" height="21" viewBox="0 0 30 21"><defs><linearGradient id="cl" x1="0" y1="0" x2="0" y2="1"><stop offset="0" stopColor="#7d9fdd" /><stop offset="1" stopColor="#a9c8f7" /></linearGradient></defs><path d="M7 20.500a6.500 6.500 0 0 1-.5-13A8.500 8.500 0 0 1 22.500 6.500 7 7 0 0 1 23 20.500z" fill="url(#cl)" stroke="#7f9fd8" /></svg>
        <Lines><span>16°C</span><Muted>Bewolkt</Muted></Lines>
      </Weather>
      <Dock>
        <DockButton aria-label="Start">{dockArt.start}</DockButton>
        <SearchPill>
          <Search size={20} strokeWidth={2} />
          <SearchInput placeholder="Zoeken" aria-label="Zoeken" />
        </SearchPill>
        {dockItems.map((d) => (
          <DockButton key={d.name} aria-label={d.name} $open={d.open} $active={d.active}>{dockArt[d.art]}</DockButton>
        ))}
      </Dock>
      <Tray>
        <TrayButton aria-label="Verborgen pictogrammen"><ChevronUp size={22} strokeWidth={1.8} /></TrayButton>
        <TrayButton aria-label="OneNote"><svg width="20" height="20" viewBox="0 0 20 20"><rect x="5" y="1" width="15" height="18" rx="1" fill="#b04fd6" /><path d="M15 1h5v18h-5z" fill="#8f35b8" /><rect y="4" width="13" height="12" rx="1" fill="#6b1f9c" /><path d="M4 13V7l5 6V7" fill="none" stroke="#fff" strokeWidth="1.600" /></svg></TrayButton>
        <TrayButton aria-label="Update"><svg width="22" height="22" viewBox="0 0 22 22" fill="none" stroke="#111" strokeWidth="1.400"><path d="M1.500 9a9.500 9.500 0 0 1 17-3M19 1v5.500h-5.500M2 20v-5.500h5.500M3 15q2.500 4 7 4.800" /><circle cx="16" cy="16" r="5.500" fill="#f09a1c" stroke="none" /></svg></TrayButton>
        <TrayButton aria-label="OneDrive"><svg width="22" height="20" viewBox="0 0 22 20"><path d="M5 14a4.500 4.500 0 0 1 0-9A7 7 0 0 1 18 6q3 2 2.500 6l-3 2z" fill="#c4c4c4" stroke="#555" strokeWidth="1.500" /><path d="M5 6q3-5 8-3 4 1 5 4l-9 2z" fill="#777" /><circle cx="16" cy="14" r="6" fill="#0d6cbd" /><path d="M16 12.500v5M16 10v1.500" stroke="#fff" strokeWidth="1.600" /></svg></TrayButton>
        <TrayButton $w={36} aria-label="Wi-Fi"><Line w={20} h={20} vb={20} sw={1.5}><path d="M1 7.500q9-8 18 0M4 10.500q6-5.500 12 0M7 13.500q3-3 6 0" /><circle cx="10" cy="16" r="1" fill="currentColor" /></Line></TrayButton>
        <TrayButton $w={30} aria-label="Volume"><Line w={20} h={20} vb={20} sw={1.3}><path d="M1 7.500h3.500L9 3.500v13l-4.500-4H1zM12 7.500q1.500 2.500 0 5M14.500 5.500q3 4.500 0 9" /><path d="M17 3.500q4 6.500 0 13" opacity=".3" /></Line></TrayButton>
        <TrayButton $w={30} aria-label="Batterij"><svg width="21" height="18" viewBox="0 0 21 18"><rect x="1" y="5" width="17" height="11" rx="2.500" fill="none" stroke="#111" strokeWidth="1.400" /><rect x="3" y="7" width="13" height="7" rx="1" fill="#111" /><path d="M19 8.500q2 2 0 4z" fill="#111" stroke="#111" /><path d="M4 0L1 6h3L2 10l6-6H5l2-4z" fill="#111" stroke="#f0f0f0" strokeWidth=".6" /></svg></TrayButton>
        <Clock><Lines $align="right"><span>17:24</span><span>9-10-2024</span></Lines></Clock>
        <TrayButton $w={28} aria-label="Meldingen"><Line w={20} h={20} vb={20} sw={1.4}><path d="M9 3q-5 1-5 6v3l-2 3.500h15L15.500 12M7.500 16q2 3 4.500 0M8.500 7h3.500l-3.500 4h3.500M14 1.500h4L14 6h4" /></Line></TrayButton>
      </Tray>
    </Taskbar>
  );
}

export default function App() {
  return (
    <Desktop>
      <GlobalStyle />
      <BrowserFrame />
      <Viewport>
        <SideMenu />
        <Overview />
        <Backdrop />
        <TracerDrawer />
      </Viewport>
      <TaskBar />
    </Desktop>
  );
}
